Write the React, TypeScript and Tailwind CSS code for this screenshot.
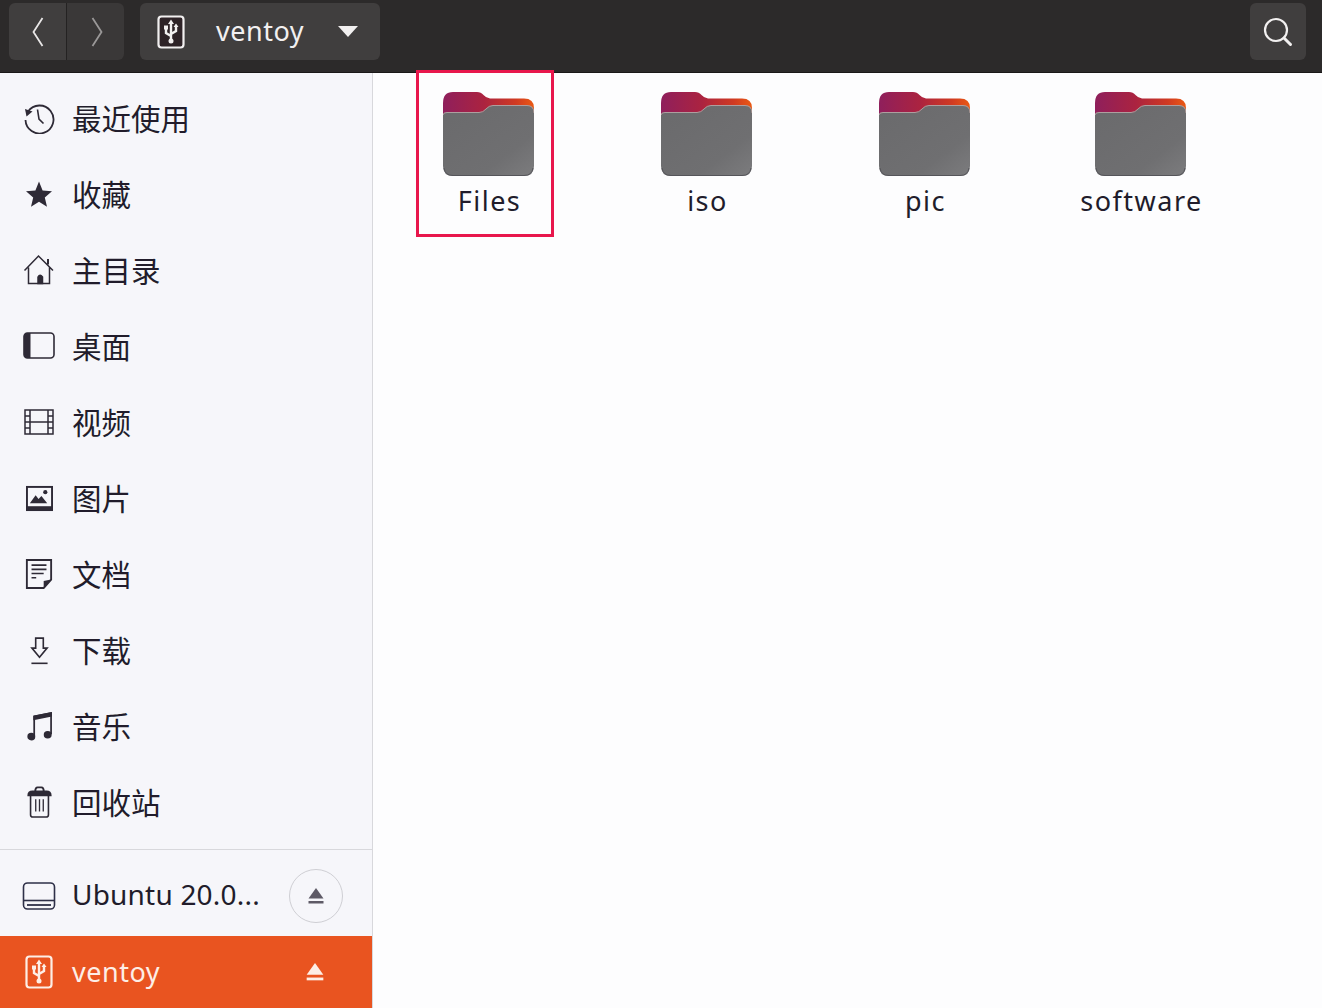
import React from 'react';

type IconProps = { className?: string; fill?: string };

const UsbIcon = ({ className, fill = 'none' }: IconProps) => (
  <svg viewBox="0 0 28 34" className={className} fill="none">
    <rect x="1.500" y="1.500" width="25" height="31" rx="3" fill={fill} stroke="currentColor" strokeWidth="2.200" />
    <path d="M14 7v19M14 21l-5-3v-4M14 19l5-3v-4" stroke="currentColor" strokeWidth="2.400" />
    <path d="M14 4.500l3 4.500h-6zM7 10.500h4v4H7zM19 8.500l2.500 3.500h-5z" fill="currentColor" />
    <circle cx="14" cy="26" r="2.500" fill="currentColor" />
  </svg>
);

const EjectIcon = ({ className }: IconProps) => (
  <svg viewBox="0 0 18 18" className={className} fill="currentColor">
    <path d="M9 1 16.500 11.500H1.500z" />
    <rect x="1.500" y="14" width="15" height="2.500" />
  </svg>
);

const RecentIcon = () => (
  <svg viewBox="0 0 32 32" className="h-8 w-8" fill="none" stroke="currentColor" strokeWidth="1.800">
    <path d="M5 9.500A14 14 0 1 1 2.500 18" />
    <path d="M2 7 9.500 9.500 3.500 14.500z" fill="currentColor" stroke="none" />
    <path d="M14.500 7.500 16 17 20.500 21.500" strokeWidth="1.600" />
  </svg>
);

const StarIcon = () => (
  <svg viewBox="0 0 32 32" className="h-8 w-8" fill="currentColor">
    <path d="M16 3.500 19.600 12.600 29 13.200 21.800 19.400 24 28.800 16 23.700 8 28.800 10.200 19.400 3 13.200 12.400 12.600z" />
  </svg>
);

const HomeIcon = () => (
  <svg viewBox="0 0 32 32" className="h-8 w-8" fill="none" stroke="currentColor" strokeWidth="1.500">
    <path d="M1.500 16.500 15.500 2 30 16.500M5.500 13.500V29.500H26.500V13.500" />
    <path d="M15 29.500V23Q17 19.500 19.500 23V29.500z" fill="currentColor" />
    <path d="M25 5v5.500" strokeWidth="2" />
  </svg>
);

const DesktopIcon = () => (
  <svg viewBox="0 0 32 28" className="h-7 w-8" fill="none">
    <rect x="1" y="1" width="30" height="25" rx="3.500" stroke="currentColor" strokeWidth="1.600" />
    <path d="M4.500 1H7.500V26H4.500A3.500 3.500 0 0 1 1 22.500V4.500A3.500 3.500 0 0 1 4.500 1z" fill="currentColor" />
  </svg>
);

const VideoIcon = () => (
  <svg viewBox="0 0 32 28" className="h-7 w-8" fill="none" stroke="currentColor" strokeWidth="1.500">
    <rect x="2" y="2" width="28" height="24" />
    <path d="M7 2V26M25 2V26M7 14H25M2 8H7M2 14H7M2 20H7M25 8H30M25 14H30M25 20H30" />
  </svg>
);

const PictureIcon = () => (
  <svg viewBox="0 0 30 28" className="h-[27px] w-[29px]" fill="none">
    <rect x="2" y="2" width="26" height="24" stroke="currentColor" strokeWidth="2" />
    <rect x="2" y="22" width="26" height="4" fill="currentColor" />
    <path d="M5 19 11 10.500 14 14.500 17 11.500 23 19z" fill="currentColor" />
    <circle cx="21" cy="7.500" r="2.200" fill="currentColor" />
  </svg>
);

const DocumentIcon = () => (
  <svg viewBox="0 0 30 34" className="h-8 w-[28px]" fill="none" stroke="currentColor" strokeWidth="2">
    <path d="M2 2H28V23L20 32H2z" />
    <path d="M7 7.500H23M7 12H23M7 16.500H20M7 21H12" strokeWidth="1.700" />
    <path d="M28 23 20 32V24.500z" fill="currentColor" stroke="none" />
  </svg>
);

const DownloadIcon = () => (
  <svg viewBox="0 0 20 30" className="h-[29px] w-[19px]" fill="none" stroke="currentColor" strokeWidth="1.700">
    <path d="M6 2H14V12.500H18L10 22 2 12.500H6z" />
    <path d="M1.500 28.500H18.500" />
  </svg>
);

const MusicIcon = () => (
  <svg viewBox="0 0 28 32" className="h-[31px] w-[27px]" fill="none" stroke="currentColor" strokeWidth="1.800">
    <path d="M8.500 26V5.500L26 2V24" />
    <path d="M8.500 5.500 26 2V5L8.500 8.500z" fill="currentColor" />
    <ellipse cx="5.500" cy="26.500" rx="3.200" ry="3" fill="currentColor" />
    <ellipse cx="22.500" cy="24.500" rx="3.200" ry="3" fill="currentColor" />
  </svg>
);

const TrashIcon = () => (
  <svg viewBox="0 0 26 34" className="h-8 w-[25px]" fill="none" stroke="currentColor" strokeWidth="1.700">
    <path d="M3.500 9V30.500A2.500 2.500 0 0 0 6 33H20A2.500 2.500 0 0 0 22.500 30.500V9" />
    <path d="M1 10Q1 5.500 5.500 5.500H20.500Q25 5.500 25 10z" fill="currentColor" />
    <path d="M8.500 5.500Q8.500 1.500 11 1.500H15Q17.500 1.500 17.500 5.500" strokeWidth="2" />
    <path d="M9 14V27M13 14V27M17 14V27" strokeWidth="1.400" />
  </svg>
);

const DriveIcon = () => (
  <svg viewBox="0 0 34 30" className="h-[30px] w-[34px]" fill="none" stroke="currentColor" strokeWidth="1.600">
    <rect x="1.500" y="2" width="31" height="26" rx="4" />
    <path d="M1.500 19.500H32.500" />
    <path d="M5 24H29" strokeWidth="1.800" />
  </svg>
);

const Folder = () => (
  <svg viewBox="0 0 91 84" className="h-[84px] w-[91px]">
    <defs>
      <linearGradient id="tab" x1="0" y1="0" x2="1" y2="0">
        <stop offset="0" stopColor="#8f1f5c" />
        <stop offset="0.45" stopColor="#ab2340" />
        <stop offset="0.8" stopColor="#d03a22" />
        <stop offset="1" stopColor="#ea5a14" />
      </linearGradient>
      <linearGradient id="front" x1="0" y1="0" x2="1" y2="1">
        <stop offset="0" stopColor="#6a6a6c" />
        <stop offset="0.7" stopColor="#6f6f71" />
        <stop offset="1" stopColor="#7c7c7e" />
      </linearGradient>
    </defs>
    <path d="M0 11Q0 0 10 0H34Q38 0 40.500 3T47 6.500H81Q91 6.500 91 16V30H0z" fill="url(#tab)" />
    <path
      d="M0 23Q0 20.500 4 20.500H36Q40 20.500 43 17T50 13.500H84Q91 13.500 91 21V74Q91 84 81 84H10Q0 84 0 74z"
      fill="url(#front)"
    />
    <path d="M0 23Q0 20.500 4 20.500H36Q40 20.500 43 17T50 13.500H84Q91 13.500 91 21" fill="none" stroke="#ad9f9f" strokeWidth="1" />
    <path d="M1 76Q2 83.500 10 83.500H81Q89 83.500 90 76" fill="none" stroke="#55555a" strokeWidth="1" />
  </svg>
);

const places = [
  { label: '最近使用', icon: <RecentIcon /> },
  { label: '收藏', icon: <StarIcon /> },
  { label: '主目录', icon: <HomeIcon /> },
  { label: '桌面', icon: <DesktopIcon /> },
  { label: '视频', icon: <VideoIcon /> },
  { label: '图片', icon: <PictureIcon /> },
  { label: '文档', icon: <DocumentIcon /> },
  { label: '下载', icon: <DownloadIcon /> },
  { label: '音乐', icon: <MusicIcon /> },
  { label: '回收站', icon: <TrashIcon /> },
];

const folders = ['Files', 'iso', 'pic', 'software'];

export default function App() {
  return (
    <div className="flex h-[1008px] w-[1322px] flex-col overflow-hidden bg-white font-['Noto_Sans','Noto_Sans_CJK_SC',sans-serif] text-[#211c2b]">
      <header className="flex h-[73px] shrink-0 items-start justify-between border-b border-[#1a1818] bg-[#2c2a2a] pl-[9px] pr-4 pt-[3px]">
        <div className="flex items-center gap-4">
          <div className="flex h-[57px] w-[115px] overflow-hidden rounded-md">
            <button className="flex w-[58px] items-center justify-center border-r border-[#242222] bg-[#403e3e] text-[#e8e6e6]">
              <svg viewBox="0 0 14 30" className="h-[30px] w-3.5" fill="none" stroke="currentColor" strokeWidth="1.800">
                <path d="M11.500 1 2.500 15 11.500 29" />
              </svg>
            </button>
            <button className="flex flex-1 items-center justify-center bg-[#3a3838] pl-[3px] text-[#9a9898]">
              <svg viewBox="0 0 14 30" className="h-[30px] w-3.5" fill="none" stroke="currentColor" strokeWidth="1.800">
                <path d="M2.500 1 11.500 15 2.500 29" />
              </svg>
            </button>
          </div>
          <button className="flex h-[57px] w-[240px] items-center rounded-md bg-[#403e3e] pl-[17px] pr-[22px] text-[#f2f0f0]">
            <UsbIcon className="h-[34px] w-7" fill="#2e2327" />
            <span className="ml-[31px] pb-0.5 text-[27px] leading-none tracking-[0.5px]">ventoy</span>
            <svg viewBox="0 0 20 12" className="ml-auto h-3 w-5" fill="currentColor">
              <path d="M0 0H20L10 11z" />
            </svg>
          </button>
        </div>
        <button className="flex h-[57px] w-14 items-center justify-center rounded-md bg-[#403e3e] text-[#f2f0f0]">
          <svg viewBox="0 0 30 30" className="h-[30px] w-[30px]" fill="none" stroke="currentColor" strokeWidth="2.200">
            <circle cx="13" cy="13" r="11" />
            <path d="M21 21 27.500 27.500" strokeWidth="3" strokeLinecap="round" />
          </svg>
        </button>
      </header>

      <div className="flex min-h-0 flex-1">
        <aside className="flex w-[373px] shrink-0 flex-col border-r border-[#d8d8dc] bg-[#f6f6fa]">
          <nav className="flex flex-col pt-[7px]">
            {places.map((place) => (
              <div key={place.label} className="flex h-[76px] items-center">
                <span className="flex w-[72px] shrink-0 items-center justify-center pl-[6px] text-[#2e2a36]">{place.icon}</span>
                <span className="pt-0.5 text-[29.5px] leading-none">{place.label}</span>
              </div>
            ))}
          </nav>
          <div className="mt-[9px] flex h-[87px] items-center border-t border-[#d8d8dc] pt-[6px]">
            <span className="flex w-[72px] shrink-0 items-center justify-center pl-[6px] text-[#2e3048]">
              <DriveIcon />
            </span>
            <span className="pb-1 text-[28px] leading-none tracking-[0.2px]">Ubuntu 20.0...</span>
            <button className="ml-auto mr-[29px] flex h-[54px] w-[54px] items-center justify-center rounded-full border border-[#cfcfd4] text-[#5e5a66]">
              <EjectIcon className="h-[18px] w-[18px]" />
            </button>
          </div>
          <div className="flex h-[72px] items-center bg-[#e95420] text-[#fdeee6]">
            <span className="flex w-[72px] shrink-0 items-center justify-center pl-[6px]">
              <UsbIcon className="h-[34px] w-7" />
            </span>
            <span className="pb-0.5 text-[27px] leading-none tracking-[0.5px]">ventoy</span>
            <EjectIcon className="ml-auto mr-[47px] h-[20px] w-[20px]" />
          </div>
        </aside>

        <main className="relative flex flex-1 items-start bg-[#fdfdfe] pl-[6px] pt-[19px]">
          {folders.map((name, i) => (
            <div key={name} className={`flex shrink-0 flex-col items-center ${i === 3 ? 'w-[214px]' : 'w-[218px]'}`}>
              <Folder />
              <span className="mt-[8px] pl-[3px] text-[27px] leading-[34px] tracking-[1.500px]">{name}</span>
            </div>
          ))}
          <div className="pointer-events-none absolute left-[43px] top-[-3px] h-[167px] w-[138px] border-[3.500px] border-[#e8164c]" />
        </main>
      </div>
    </div>
  );
}
